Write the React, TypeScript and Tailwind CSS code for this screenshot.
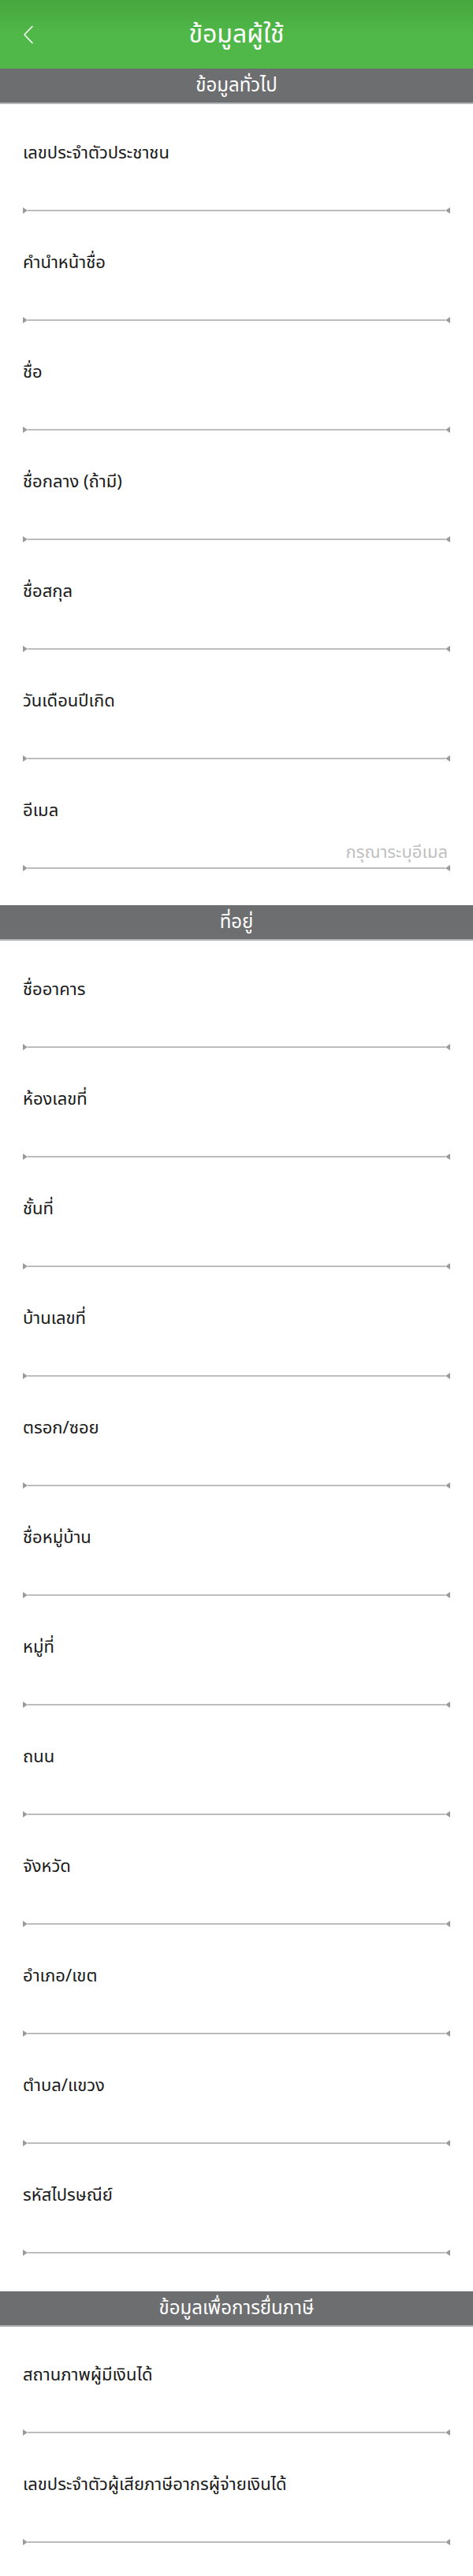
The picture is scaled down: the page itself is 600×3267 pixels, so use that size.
import React from "react";

const general = [
  "เลขประจำตัวประชาชน",
  "คำนำหน้าชื่อ",
  "ชื่อ",
  "ชื่อกลาง (ถ้ามี)",
  "ชื่อสกุล",
  "วันเดือนปีเกิด",
  "อีเมล",
];

const address = [
  "ชื่ออาคาร",
  "ห้องเลขที่",
  "ชั้นที่",
  "บ้านเลขที่",
  "ตรอก/ซอย",
  "ชื่อหมู่บ้าน",
  "หมู่ที่",
  "ถนน",
  "จังหวัด",
  "อำเภอ/เขต",
  "ตำบล/แขวง",
  "รหัสไปรษณีย์",
];

const tax = ["สถานภาพผู้มีเงินได้", "เลขประจำตัวผู้เสียภาษีอากรผู้จ่ายเงินได้"];

function Field({ label, placeholder }: { label: string; placeholder?: string }) {
  return (
    <div className="h-[139px] px-[29px] flex flex-col">
      <div className="h-[64px] flex items-center">
        <span className="text-[22px] leading-none text-[#1a1a1a]">{label}</span>
      </div>
      <div className="h-[36px] flex items-end justify-end pb-[4px]">
        {placeholder && (
          <span className="text-[22px] leading-none text-[#bfbfbf] pr-[3px]">{placeholder}</span>
        )}
      </div>
      <div className="flex items-center h-[8px]">
        <div className="w-0 h-0 border-y-[4px] border-y-transparent border-l-[6px] border-l-[#9a9a9a]" />
        <div className="flex-1 h-[1.5px] bg-[#bdbdbd]" />
        <div className="w-0 h-0 border-y-[4px] border-y-transparent border-r-[6px] border-r-[#9a9a9a]" />
      </div>
    </div>
  );
}

function SectionBar({ title }: { title: string }) {
  return (
    <div className="h-[45px] bg-[#6d6e70] border-b-[2px] border-b-[#b3b4b5] flex items-center justify-center">
      <span className="text-white text-[24px] leading-none">{title}</span>
    </div>
  );
}

export default function App() {
  return (
    <div className="w-[600px] h-[3267px] bg-white overflow-hidden font-['Noto_Sans_Thai','Noto_Sans',sans-serif]">
      <div className="h-[87px] relative flex items-center justify-center bg-gradient-to-b from-[#46a73f] via-[#50b848] to-[#50b848]">
        <svg
          className="absolute left-[29px] top-[32px]"
          width="14"
          height="24"
          viewBox="0 0 14 24"
          fill="none"
          stroke="white"
          strokeWidth="1.6"
          strokeLinecap="round"
          strokeLinejoin="round"
        >
          <path d="M12 1.5 L2 12 L12 22.5" />
        </svg>
        <span className="text-white text-[32px] leading-none">ข้อมูลผู้ใช้</span>
      </div>
      <SectionBar title="ข้อมูลทั่วไป" />
      <div className="pt-[31px] pb-[12px]">
        {general.map((l) => (
          <Field key={l} label={l} placeholder={l === "อีเมล" ? "กรุณาระบุอีเมล" : undefined} />
        ))}
      </div>
      <SectionBar title="ที่อยู่" />
      <div className="pt-[31px] pb-[14px]">
        {address.map((l) => (
          <Field key={l} label={l} />
        ))}
      </div>
      <SectionBar title="ข้อมูลเพื่อการยื่นภาษี" />
      <div className="pt-[30px]">
        {tax.map((l) => (
          <Field key={l} label={l} />
        ))}
      </div>
    </div>
  );
}
